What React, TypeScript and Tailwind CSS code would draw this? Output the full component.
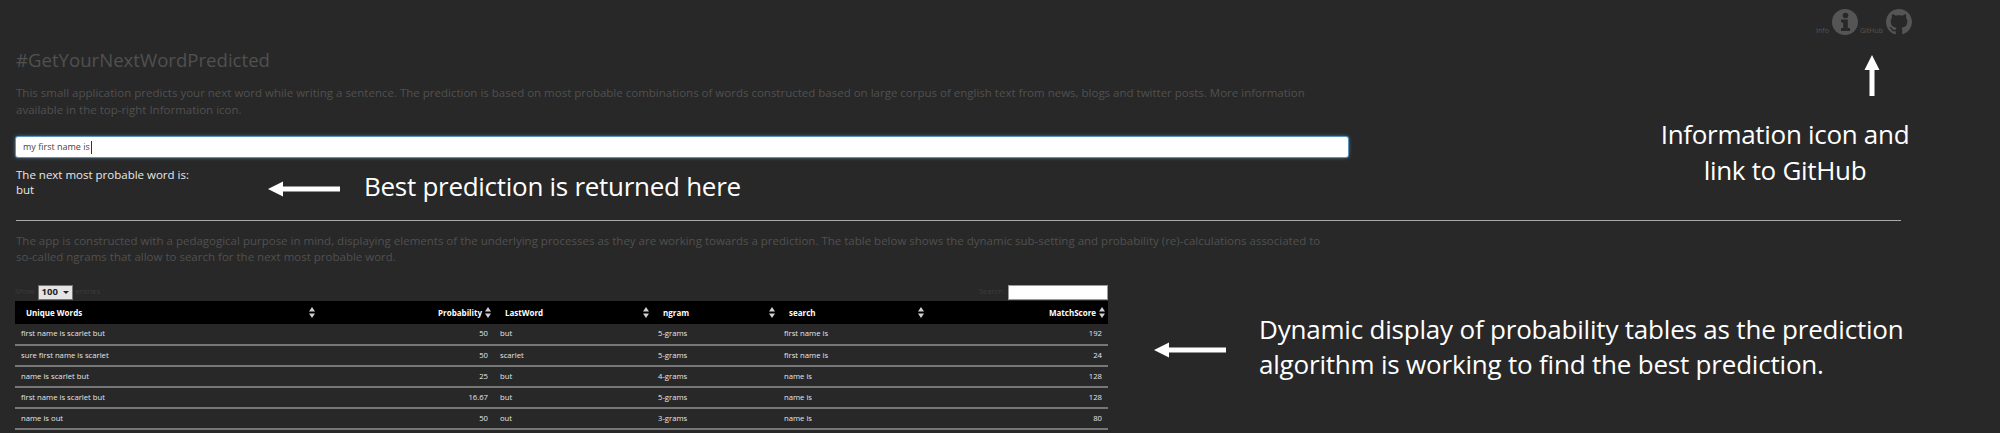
import React from "react";

const rows = [
  ["first name is scarlet but", "50", "but", "5-grams", "first name is", "192"],
  ["sure first name is scarlet", "50", "scarlet", "5-grams", "first name is", "24"],
  ["name is scarlet but", "25", "but", "4-grams", "name is", "128"],
  ["first name is scarlet but", "16.67", "but", "5-grams", "name is", "128"],
  ["name is out", "50", "out", "3-grams", "name is", "80"],
];

const SortIcon = () => (
  <svg width="6" height="11" viewBox="0 0 6 11" className="shrink-0">
    <path d="M3 0L6 4.6H0Z M3 11L0 6.4H6Z" fill="#d0d0d0" />
  </svg>
);

const Head = ({ label, right }: { label: string; right?: boolean }) => (
  <th className="p-0 text-[8px] font-bold">
    <div
      className={`flex h-[23px] items-center gap-[3px] pr-[3px] pl-[11px] ${
        right ? "justify-end" : "justify-between"
      }`}
    >
      <span>{label}</span>
      <SortIcon />
    </div>
  </th>
);

const ArrowLeft = ({ className }: { className: string }) => (
  <svg width="72" height="16" viewBox="0 0 72 16" className={className}>
    <path d="M0 8L15 0.5V5.5H72V10.5H15V15.5Z" fill="#fff" />
  </svg>
);

export default function App() {
  return (
    <div className="relative h-[433px] w-[2000px] overflow-hidden bg-[#282828] font-['Open_Sans',sans-serif]">
      <div className="flex h-[36px] items-start justify-end pt-[9px] pr-[88px] text-[7px] text-[#555]">
        <span className="mt-[17px] mr-[3px]">Info</span>
        <svg width="26" height="26" viewBox="0 0 26 26">
          <circle cx="13" cy="13" r="13" fill="#555" />
          <circle cx="13.5" cy="6.5" r="2.8" fill="#282828" />
          <path d="M9 10.5H15.8V19H18V22H9V19H11.2V13.5H9Z" fill="#282828" />
        </svg>
        <span className="mt-[17px] mr-[3px] ml-[2px]">GitHub</span>
        <svg width="26" height="26" viewBox="0 0 16 16">
          <path
            fill="#555"
            d="M8 0C3.58 0 0 3.58 0 8c0 3.54 2.29 6.53 5.47 7.59.4.07.55-.17.55-.38 0-.19-.01-.82-.01-1.49-2.01.37-2.53-.49-2.69-.94-.09-.23-.48-.94-.82-1.13-.28-.15-.68-.52-.01-.53.63-.01 1.08.58 1.23.82.72 1.21 1.87.87 2.33.66.07-.52.28-.87.51-1.07-1.78-.2-3.64-.89-3.64-3.95 0-.87.31-1.59.82-2.15-.08-.2-.36-1.02.08-2.12 0 0 .67-.21 2.2.82.64-.18 1.32-.27 2-.27s1.36.09 2 .27c1.53-1.04 2.2-.82 2.2-.82.44 1.1.16 1.92.08 2.12.51.56.82 1.27.82 2.15 0 3.07-1.87 3.75-3.65 3.95.29.25.54.73.54 1.48 0 1.07-.01 1.93-.01 2.2 0 .21.15.46.55.38A8.01 8.01 0 0 0 16 8c0-4.42-3.58-8-8-8z"
          />
        </svg>
      </div>

      <div className="ml-4 w-[1332px]">
        <h1 className="mt-[10px] text-[18.6px] leading-[28px] text-[#505050]">
          #GetYourNextWordPredicted
        </h1>
        <p className="mt-[10px] text-[11.5px] leading-[17px] text-[#505050]">
          This small application predicts your next word while writing a sentence. The prediction
          is based on most probable combinations of words constructed based on large corpus of
          english text from news, blogs and twitter posts. More information available in the
          top-right Information icon.
        </p>
        <div className="mt-[19px] flex h-[20px] items-center rounded-[2px] bg-white pl-[7px] text-[9px] text-[#444] shadow-[0_0_0_1px_#5b93bd,0_0_4px_#5b93bd]">
          my first name is
          <span className="ml-px h-[13px] w-px bg-[#333]" />
        </div>
        <div className="mt-[10px] text-[11.5px] leading-[15px] text-[#e8e8e8]">
          <div>The next most probable word is:</div>
          <div>but</div>
        </div>
      </div>

      <hr className="mt-[23px] ml-4 w-[1885px] border-t border-[#aaa]" />

      <div className="ml-4 w-[1318px]">
        <p className="mt-[12px] text-[11.5px] leading-[16px] text-[#505050]">
          The app is constructed with a pedagogical purpose in mind, displaying elements of the
          underlying processes as they are working towards a prediction. The table below shows the
          dynamic sub-setting and probability (re)-calculations associated to so-called ngrams that
          allow to search for the next most probable word.
        </p>
      </div>

      <div className="mt-[19px] ml-[15px] w-[1093px] text-[7.7px] text-[#eee]">
        <div className="flex h-[16px] items-center justify-between">
          <div className="flex items-center gap-[3px] text-[#3c3c3c]">
            <span>Show</span>
            <span className="flex h-[15px] w-[35px] items-center justify-between border border-[#777] bg-[#e4e4e4] px-[3px] text-[9.5px] font-bold text-[#222]">
              100
              <span className="h-0 w-0 border-x-[3px] border-t-[3px] border-x-transparent border-t-[#222]" />
            </span>
            <span>entries</span>
          </div>
          <div className="flex items-center gap-[3px] text-[#3c3c3c]">
            <span>Search:</span>
            <span className="h-[15px] w-[100px] border border-[#999] bg-white" />
          </div>
        </div>
        <table className="mt-px w-full table-fixed border-collapse">
          <colgroup>
            <col className="w-[303px]" />
            <col className="w-[176px]" />
            <col className="w-[158px]" />
            <col className="w-[126px]" />
            <col className="w-[149px]" />
            <col className="w-[181px]" />
          </colgroup>
          <thead>
            <tr className="bg-black text-left text-white">
              <Head label="Unique Words" />
              <Head label="Probability" right />
              <Head label="LastWord" />
              <Head label="ngram" />
              <Head label="search" />
              <Head label="MatchScore" right />
            </tr>
          </thead>
          <tbody>
            {rows.map((r, i) => (
              <tr key={i} className="h-[21px] border-b-2 border-[#777] text-[#e6e6e6]">
                <td className="px-[6px] py-0">{r[0]}</td>
                <td className="px-[6px] py-0 text-right">{r[1]}</td>
                <td className="px-[6px] py-0">{r[2]}</td>
                <td className="px-[6px] py-0">{r[3]}</td>
                <td className="px-[6px] py-0">{r[4]}</td>
                <td className="px-[6px] py-0 text-right">{r[5]}</td>
              </tr>
            ))}
          </tbody>
        </table>
      </div>

      {/* annotations laid over the app screenshot */}
      <ArrowLeft className="absolute top-[181px] left-[268px]" />
      <div className="absolute top-[166px] left-[364px] text-[26px] leading-[40px] tracking-[-0.28px] text-white">
        Best prediction is returned here
      </div>

      <svg width="16" height="42" viewBox="0 0 16 42" className="absolute top-[55px] left-[1864px]">
        <path d="M8 0L15.5 15H10.5V41H5.5V15H0.5Z" fill="#fff" />
      </svg>
      <div className="absolute top-[116px] left-[1640px] w-[290px] text-center text-[26px] leading-[36px] tracking-[-0.3px] text-white">
        Information icon and
        <br />
        link to GitHub
      </div>

      <ArrowLeft className="absolute top-[342px] left-[1154px]" />
      <div className="absolute top-[312px] left-[1259px] text-[26px] leading-[35px] tracking-[-0.2px] whitespace-nowrap text-white">
        Dynamic display of probability tables as the prediction
        <br />
        algorithm is working to find the best prediction.
      </div>
    </div>
  );
}
